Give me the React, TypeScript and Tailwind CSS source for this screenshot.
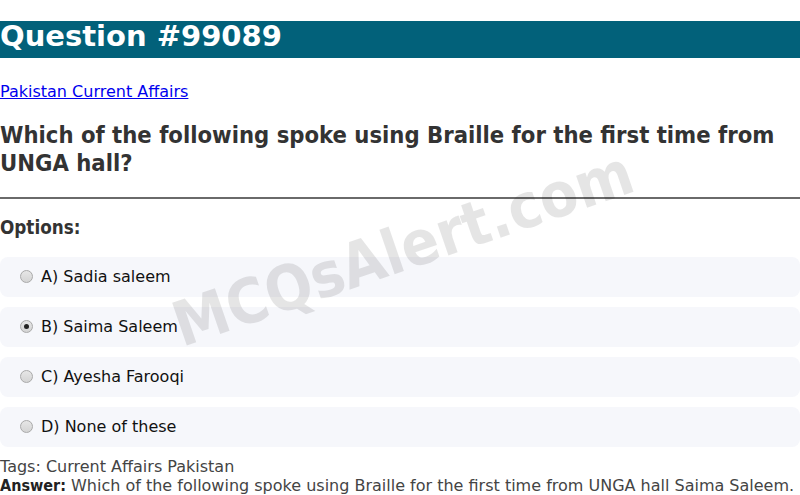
import React from "react";

function Radio({ checked }: { checked?: boolean }) {
  return (
    <span className="flex h-[13px] w-[13px] shrink-0 items-center justify-center rounded-full border border-[#a9a9a9] bg-gradient-to-b from-[#e6e6e6] to-[#d4d4d4]">
      {checked ? <span className="h-[5px] w-[5px] rounded-full bg-[#222]" /> : null}
    </span>
  );
}

const options = [
  { label: "A) Sadia saleem", checked: false },
  { label: "B) Saima Saleem", checked: true },
  { label: "C) Ayesha Farooqi", checked: false },
  { label: "D) None of these", checked: false },
];

const cond = "font-['DejaVu_Sans_Condensed','DejaVu_Sans',sans-serif] font-stretch-condensed";

export default function App() {
  return (
    <div className="relative w-[800px] h-[495px] overflow-hidden bg-white font-['DejaVu_Sans',sans-serif] text-[16px] leading-[normal]">
      <h1 className="mt-[21.44px] mb-[24px] h-[37px] bg-[#02617a] text-[29px] leading-[31px] font-bold text-white whitespace-nowrap">
        Question #99089
      </h1>
      <a href="#" className="block w-fit text-[#0000ee] underline">
        Pakistan Current Affairs
      </a>
      <h2 className={`mt-[19.92px] mb-[19.92px] text-[23.6px] leading-[28px] font-bold text-[#333333] ${cond}`}>
        Which of the following spoke using Braille for the first time from UNGA hall?
      </h2>
      <hr className="border-0 border-t-2 border-[#6a6a6a]" />
      <h3 className={`mt-[18px] mb-[18.72px] text-[18.72px] font-bold text-[#333333] ${cond}`}>Options:</h3>
      <div className="flex flex-col gap-[10px]">
        {options.map((o) => (
          <div
            key={o.label}
            className="flex h-[40px] items-center gap-[8px] rounded-[8px] bg-[#f6f7fb] pl-[20px] text-[#111111]"
          >
            <Radio checked={o.checked} />
            <span>{o.label}</span>
          </div>
        ))}
      </div>
      <div className="mt-[10px] text-[#444444]">Tags: Current Affairs Pakistan</div>
      <div className="text-[#444444] whitespace-nowrap">
        <span className={`font-bold text-[#222222] ${cond}`}>Answer:</span> Which of the following spoke using Braille
        for the first time from UNGA hall Saima Saleem.
      </div>
      <div
        className={`pointer-events-none absolute left-[403px] top-[249px] -translate-x-1/2 -translate-y-1/2 -rotate-[19deg] whitespace-nowrap text-[62px] font-bold leading-none text-black/10 ${cond}`}
      >
        MCQsAlert.com
      </div>
    </div>
  );
}
